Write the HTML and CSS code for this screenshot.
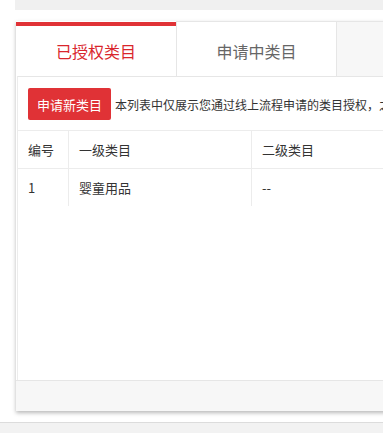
FILE: index.html
```html
<!DOCTYPE html>
<html lang="zh-CN">
<head>
    <meta charset="UTF-8">
    <meta name="viewport" content="width=device-width, initial-scale=1.0">
    <title>类目管理</title>
    <link rel="stylesheet" href="styles.css">
</head>
<body>
    <div class="top-bar"></div>

    <div class="panel">
        <div class="tabs">
            <div class="tab active">已授权类目</div>
            <div class="tab">申请中类目</div>
            <div class="tab-rest"></div>
        </div>

        <div class="content">
            <div class="toolbar">
                <button class="apply-btn">申请新类目</button>
                <span class="tip">本列表中仅展示您通过线上流程申请的类目授权，之前已有的类目授权不在此列表中展示</span>
            </div>

            <table class="cat-table">
                <thead>
                    <tr>
                        <th class="col-id">编号</th>
                        <th class="col-first">一级类目</th>
                        <th>二级类目</th>
                    </tr>
                </thead>
                <tbody>
                    <tr>
                        <td>1</td>
                        <td>婴童用品</td>
                        <td>--</td>
                    </tr>
                </tbody>
            </table>
        </div>

        <div class="footer"></div>
    </div>

    <div class="bottom-bar"></div>
</body>
</html>
```

FILE: styles.css
```css
/* Base Styles */
body {
    font-family: "Microsoft YaHei", "Noto Sans CJK SC", sans-serif;
    margin: 0;
    padding: 0;
    background-color: #fff;
    color: #333;
    overflow: hidden;
    height: 433px;
}

.top-bar {
    margin-left: 15px;
    height: 10px;
    background-color: #f0f0f0;
}

/* Panel */
.panel {
    margin: 11px 0 0 16px;
    width: 480px;
    background-color: #fff;
    box-shadow: 0 2px 4px rgba(0,0,0,0.28);
}

/* Tabs */
.tabs {
    display: flex;
    height: 55px;
}

.tab {
    width: 160px;
    box-sizing: border-box;
    border-top: 1px solid #e6e6e6;
    padding-top: 4px;
    line-height: 50px;
    text-align: center;
    font-size: 16px;
    color: #666;
    background-color: #fff;
}

.tab + .tab {
    border-left: 1px solid #e6e6e6;
}

.tab.active {
    border-top-color: #fff;
    box-shadow: inset 0 4px 0 #e03236;
    color: #d9262c;
}

.tab-rest {
    flex: 1;
    border-top: 1px solid #e6e6e6;
    border-left: 1px solid #e6e6e6;
    background-color: #f7f7f7;
}

/* Content */
.content {
    height: 303px;
    margin-left: 1px;
    border-top: 1px solid #e6e6e6;
    border-left: 1px solid #ececec;
}

.toolbar {
    display: flex;
    align-items: center;
    gap: 4px;
    padding: 11px 10px 10px;
    white-space: nowrap;
}

.apply-btn {
    font-family: inherit;
    font-size: 13px;
    height: 32px;
    padding: 0 9px;
    border: none;
    border-radius: 2px;
    background-color: #e03236;
    color: #fff;
}

.tip {
    font-size: 12px;
    color: #333;
}

/* Table */
.cat-table {
    border-collapse: collapse;
    font-size: 13px;
    width: 460px;
}

.cat-table th,
.cat-table td {
    height: 37px;
    padding: 0 10px;
    text-align: left;
    font-weight: normal;
    border-top: 1px solid #ececec;
    border-left: 1px solid #ececec;
}

.cat-table th:first-child,
.cat-table td:first-child {
    border-left: none;
}

.col-id {
    width: 30px;
}

.col-first {
    width: 162px;
}

/* Footer */
.footer {
    height: 30px;
    border-top: 1px solid #e6e6e6;
    background-color: #f7f7f7;
}

.bottom-bar {
    margin-top: 11px;
    height: 11px;
    border-top: 1px solid #dcdcdc;
    background-color: #f2f2f2;
}
```
